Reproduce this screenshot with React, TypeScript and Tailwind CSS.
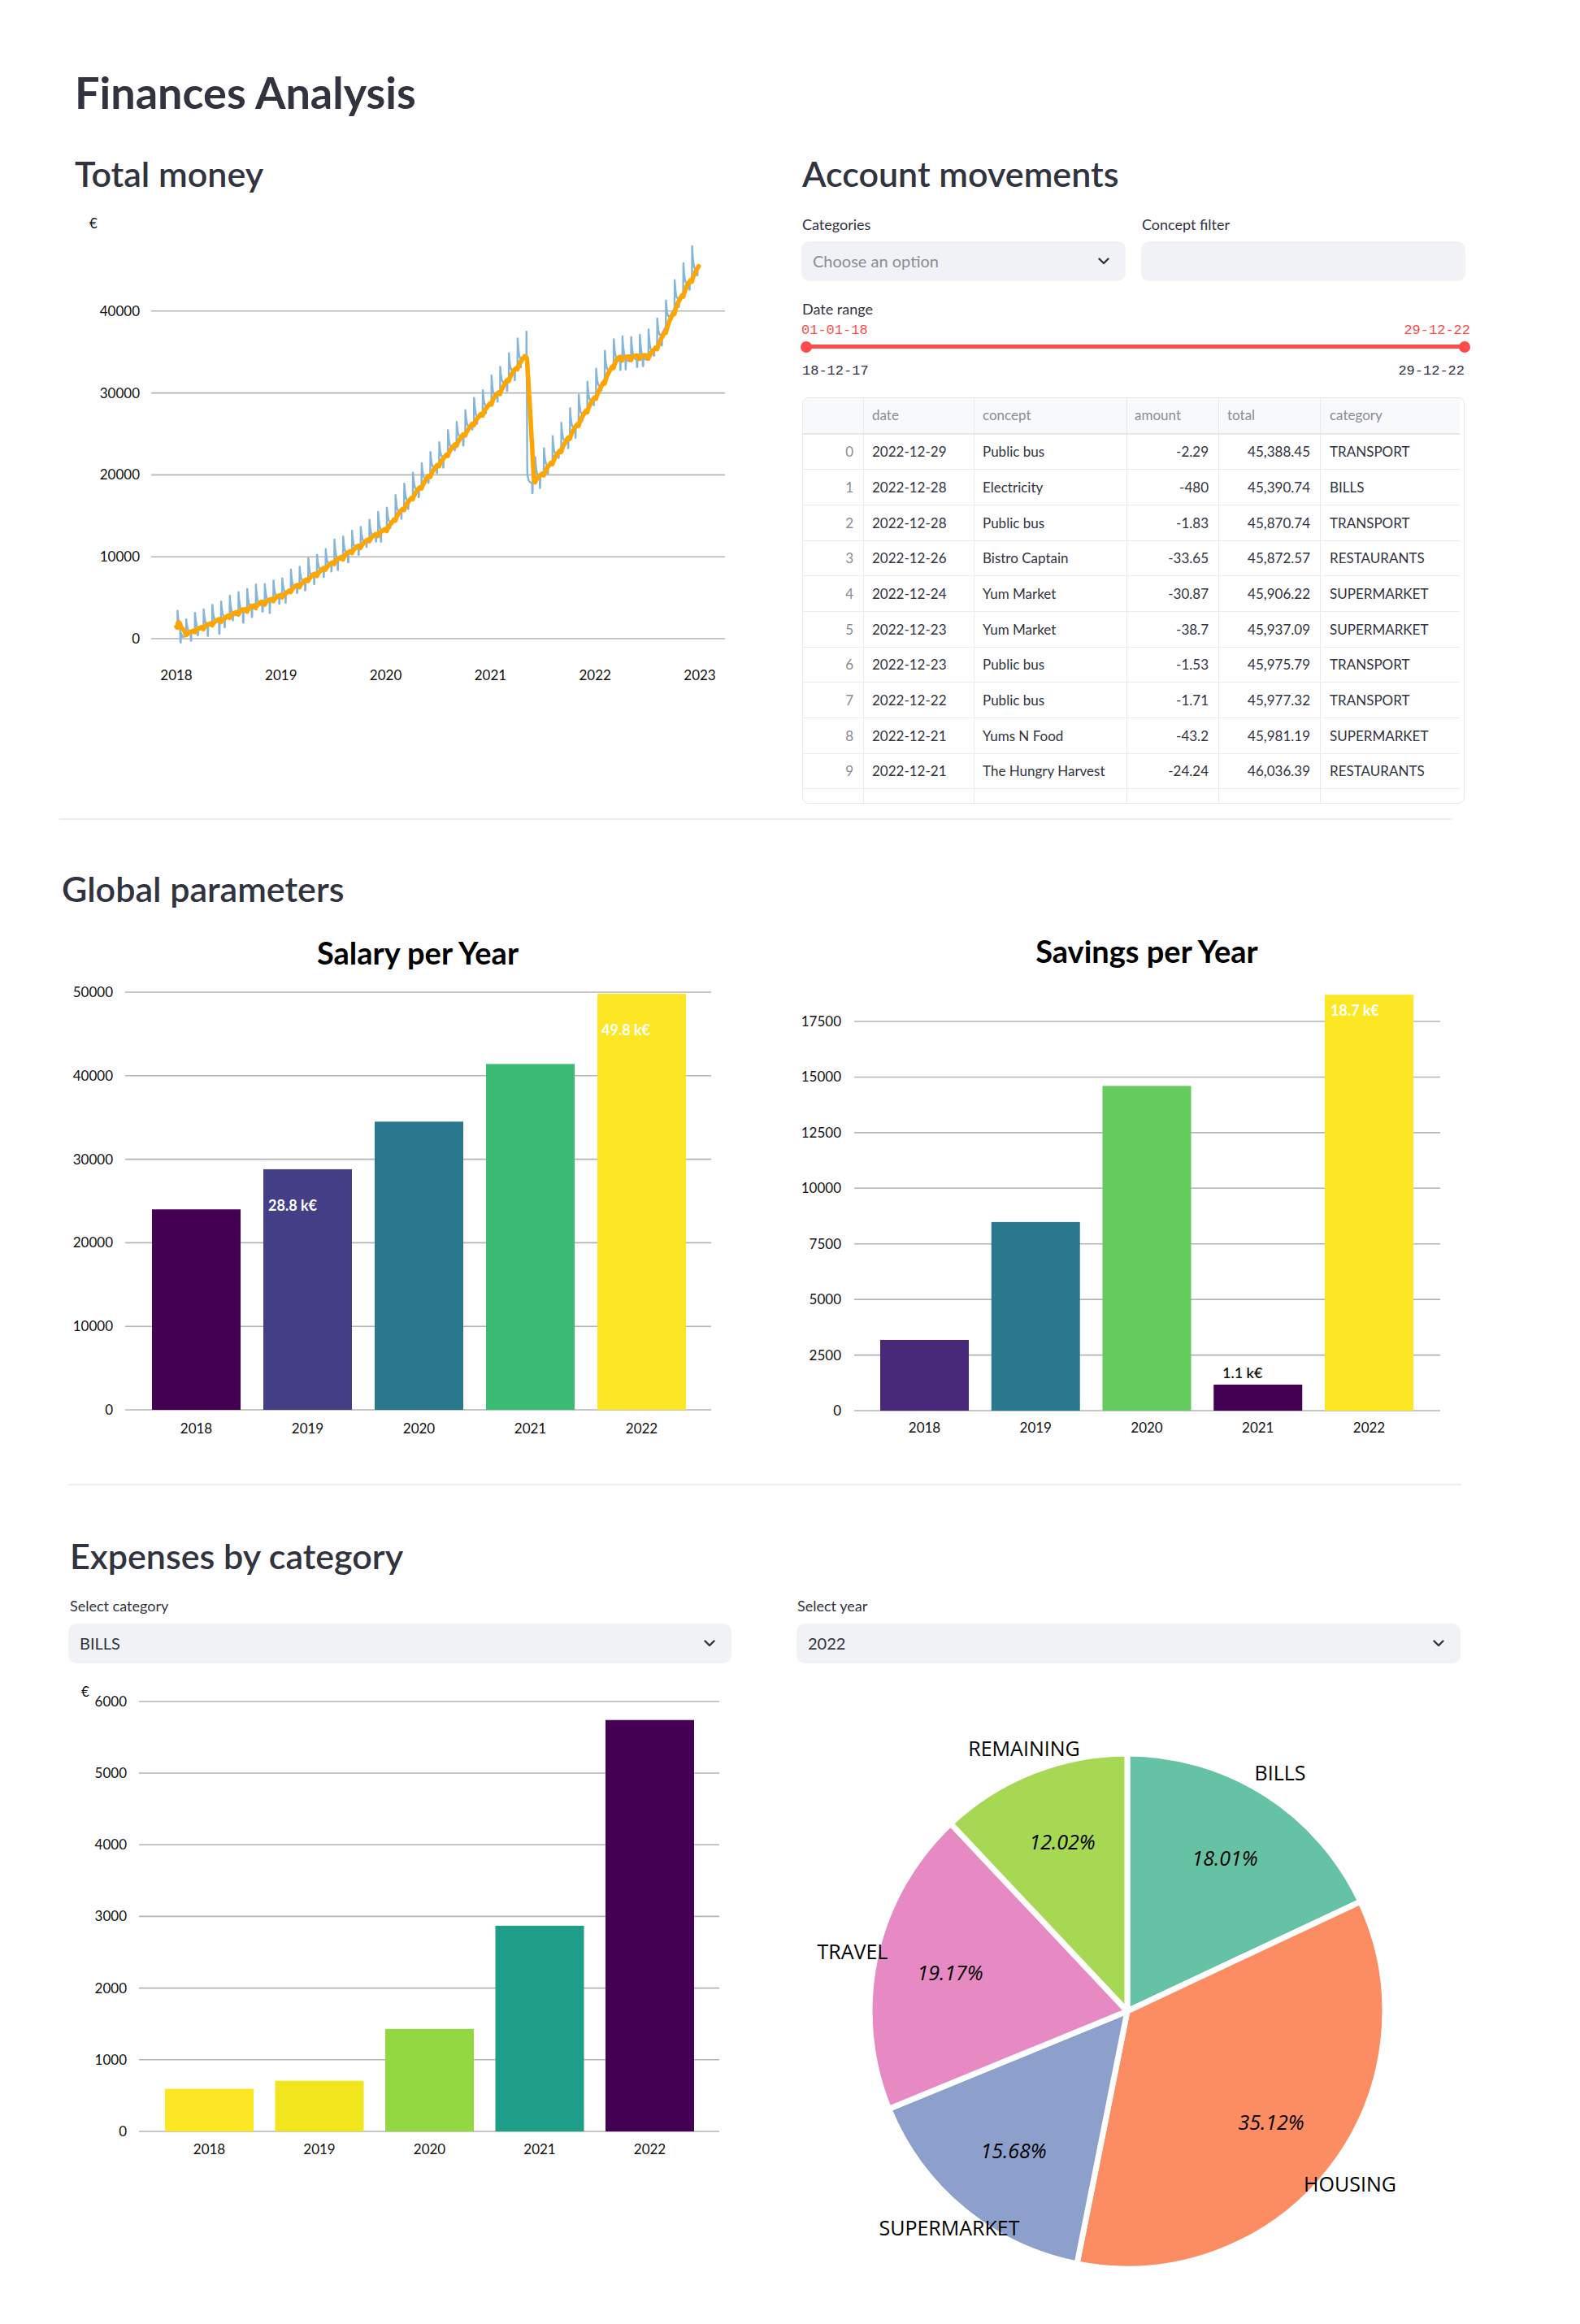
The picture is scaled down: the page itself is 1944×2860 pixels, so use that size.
import React from "react";

const TICK = "Lato, 'Noto Sans', sans-serif";
const PIEF = "'Open Sans', 'Noto Sans', sans-serif";

function Chevron() {
  return (
    <svg width="14" height="9" viewBox="0 0 14 9">
      <polyline points="1.5,1.5 7,7 12.5,1.5" fill="none" stroke="#31333F" strokeWidth="2.4" strokeLinecap="round" strokeLinejoin="round" />
    </svg>
  );
}

function Select({ value, placeholder }: { value?: string; placeholder?: string }) {
  return (
    <div className="h-[49px] rounded-[10px] bg-[#F0F2F6] flex items-center justify-between pl-[14px] pr-[20px]">
      {value ? (
        <span className="text-[20px] text-[#31333F]">{value}</span>
      ) : (
        <span className="text-[20px] text-[#8A8C93]">{placeholder}</span>
      )}
      <Chevron />
    </div>
  );
}

/* ---------------- Total money chart ---------------- */
const KP: [number, number][] = [
  [0, 2000], [0.06, 800], [0.5, 3200], [1.0, 5700], [1.5, 9800], [2.0, 14000], [2.5, 22000],
  [3.0, 29500], [3.345, 35600], [3.352, 19400], [3.45, 20200], [3.6, 22600], [4.0, 30400],
  [4.18, 34600], [4.5, 34900], [4.6, 36900], [4.8, 42300], [4.99, 46400],
];
function base(t: number) {
  for (let i = 0; i < KP.length - 1; i++) {
    const [t0, v0] = KP[i];
    const [t1, v1] = KP[i + 1];
    if (t >= t0 && t <= t1) return v0 + ((v1 - v0) * (t - t0)) / (t1 - t0);
  }
  return KP[KP.length - 1][1];
}
function rnd(n: number) {
  const x = Math.sin(n * 127.1 + 311.7) * 43758.5453;
  return x - Math.floor(x);
}
function moneySeries() {
  const N = 3000;
  const blue: number[] = [];
  const ts: number[] = [];
  for (let i = 0; i <= N; i++) {
    const t = (4.99 * i) / N;
    const p = 1 / 12;
    const tt = t - 0.01;
    const m = Math.floor(tt / p);
    const f = (tt - m * p) / p;
    const amp = 2000 + 260 * t + rnd(m) * 700;
    let v = base(t) + amp * Math.exp(-6 * f) - amp * 0.25;
    const dipAt = 0.3 + rnd(m + 50) * 0.5;
    if (f > dipAt && f < dipAt + 0.05) v -= 600 + rnd(m + 90) * 900;
    blue.push(v);
    ts.push(t);
  }
  const W = 40;
  const orange: number[] = [];
  for (let i = 0; i <= N; i++) {
    let s = 0;
    let c = 0;
    for (let j = Math.max(0, i - W); j <= i; j++) {
      s += blue[j];
      c++;
    }
    orange.push(s / c);
  }
  const X = (t: number) => 217 + t * 128.8;
  const Y = (v: number) => 786 - v * 0.01008;
  const bp = ts.map((t, i) => `${X(t).toFixed(1)},${Y(blue[i]).toFixed(1)}`).join(" ");
  const op = ts.map((t, i) => `${X(t).toFixed(1)},${Y(orange[i]).toFixed(1)}`).join(" ");
  return { bp, op };
}

function TotalMoneyChart() {
  const { bp, op } = moneySeries();
  const grid = [0, 10000, 20000, 30000, 40000];
  const years = ["2018", "2019", "2020", "2021", "2022", "2023"];
  return (
    <svg width="808" height="588" viewBox="92 262 808 588" className="block">
      <text x="110" y="281" fontFamily={TICK} fontSize="17" fill="#111">€</text>
      {grid.map((g) => {
        const y = 786 - g * 0.01008;
        return (
          <g key={g}>
            <line x1="186" x2="892" y1={y} y2={y} stroke="#b5b5b5" strokeWidth="1.6" />
            <text x="172" y={y} dy="0.35em" textAnchor="end" fontFamily={TICK} fontSize="17" fill="#111">{g}</text>
          </g>
        );
      })}
      {years.map((yr, i) => (
        <text key={yr} x={217 + i * 128.8} y="831" dy="0.35em" textAnchor="middle" fontFamily={TICK} fontSize="17" fill="#111">{yr}</text>
      ))}
      <polyline points={bp} fill="none" stroke="#84b5da" strokeWidth="2.4" strokeLinejoin="round" />
      <polyline points={op} fill="none" stroke="#FFA500" strokeWidth="5.5" strokeLinejoin="round" strokeLinecap="round" />
    </svg>
  );
}

/* ---------------- Bar charts ---------------- */
type Bar = { v: number; c: string };
function BarChart(props: {
  vb: [number, number, number, number];
  bars: Bar[];
  x0: number;
  pitch: number;
  bw: number;
  y0: number;
  k: number;
  ticks: number[];
  gx1: number;
  gx2: number;
  labelRight: number;
  xLabelY: number;
  title?: { text: string; x: number; y: number };
  euro?: { x: number; y: number };
  notes?: { text: string; x: number; y: number; fill: string; weight: number }[];
}) {
  const { vb, bars, x0, pitch, bw, y0, k, ticks, gx1, gx2, labelRight, xLabelY, title, euro, notes } = props;
  const years = ["2018", "2019", "2020", "2021", "2022"];
  return (
    <svg width={vb[2]} height={vb[3]} viewBox={vb.join(" ")} className="block shrink-0">
      {title && (
        <text x={title.x} y={title.y} textAnchor="middle" fontFamily={TICK} fontWeight="700" fontSize="38" fill="#000">{title.text}</text>
      )}
      {euro && <text x={euro.x} y={euro.y} fontFamily={TICK} fontSize="17" fill="#111">€</text>}
      {ticks.map((g) => {
        const y = y0 - g * k;
        return (
          <g key={g}>
            <line x1={gx1} x2={gx2} y1={y} y2={y} stroke="#b5b5b5" strokeWidth="1.6" />
            <text x={labelRight} y={y} dy="0.35em" textAnchor="end" fontFamily={TICK} fontSize="17" fill="#111">{g}</text>
          </g>
        );
      })}
      {bars.map((b, i) => {
        const x = x0 + i * pitch;
        const top = y0 - b.v * k;
        return (
          <g key={i}>
            <rect x={x} y={top} width={bw} height={y0 - top} fill={b.c} />
            <text x={x + bw / 2} y={xLabelY} dy="0.35em" textAnchor="middle" fontFamily={TICK} fontSize="17" fill="#111">{years[i]}</text>
          </g>
        );
      })}
      {notes &&
        notes.map((n) => (
          <text key={n.text} x={n.x} y={n.y} dy="0.35em" fontFamily={TICK} fontWeight={n.weight} fontSize="18" fill={n.fill}>{n.text}</text>
        ))}
    </svg>
  );
}

/* ---------------- Pie ---------------- */
function PieChart() {
  const cx = 1387;
  const cy = 2476;
  const r = 317;
  const slices = [
    { a1: 90, a2: 25.164, c: "#66C2A5" },
    { a1: 25.164, a2: -101.268, c: "#FC8D62" },
    { a1: -101.268, a2: -157.716, c: "#8DA0CB" },
    { a1: -157.716, a2: -226.728, c: "#E78AC3" },
    { a1: -226.728, a2: -270, c: "#A6D854" },
  ];
  const pt = (a: number) => [cx + r * Math.cos((a * Math.PI) / 180), cy - r * Math.sin((a * Math.PI) / 180)];
  const labels = [
    { t: "REMAINING", x: 1260, y: 2153 },
    { t: "BILLS", x: 1575, y: 2183 },
    { t: "TRAVEL", x: 1049, y: 2403 },
    { t: "HOUSING", x: 1661, y: 2689 },
    { t: "SUPERMARKET", x: 1168, y: 2743 },
  ];
  const pcts = [
    { t: "12.02%", x: 1307, y: 2268 },
    { t: "18.01%", x: 1507, y: 2288 },
    { t: "19.17%", x: 1169, y: 2429 },
    { t: "15.68%", x: 1247, y: 2648 },
    { t: "35.12%", x: 1564, y: 2613 },
  ];
  return (
    <svg width="817" height="780" viewBox="980 2060 817 780" className="block">
      {slices.map((s, i) => {
        const [x1, y1] = pt(s.a1);
        const [x2, y2] = pt(s.a2);
        const large = s.a1 - s.a2 > 180 ? 1 : 0;
        return (
          <path
            key={i}
            d={`M ${cx} ${cy} L ${x1} ${y1} A ${r} ${r} 0 ${large} 1 ${x2} ${y2} Z`}
            fill={s.c}
            stroke="#fff"
            strokeWidth="7"
            strokeLinejoin="round"
          />
        );
      })}
      {labels.map((l) => (
        <text key={l.t} x={l.x} y={l.y} dy="0.35em" textAnchor="middle" fontFamily={PIEF} fontSize="25" fill="#000">{l.t}</text>
      ))}
      {pcts.map((l) => (
        <text key={l.t} x={l.x} y={l.y} dy="0.35em" textAnchor="middle" fontFamily={PIEF} fontStyle="italic" fontSize="25" fill="#000">{l.t}</text>
      ))}
    </svg>
  );
}

/* ---------------- Table ---------------- */
const ROWS = [
  ["0", "2022-12-29", "Public bus", "-2.29", "45,388.45", "TRANSPORT"],
  ["1", "2022-12-28", "Electricity", "-480", "45,390.74", "BILLS"],
  ["2", "2022-12-28", "Public bus", "-1.83", "45,870.74", "TRANSPORT"],
  ["3", "2022-12-26", "Bistro Captain", "-33.65", "45,872.57", "RESTAURANTS"],
  ["4", "2022-12-24", "Yum Market", "-30.87", "45,906.22", "SUPERMARKET"],
  ["5", "2022-12-23", "Yum Market", "-38.7", "45,937.09", "SUPERMARKET"],
  ["6", "2022-12-23", "Public bus", "-1.53", "45,975.79", "TRANSPORT"],
  ["7", "2022-12-22", "Public bus", "-1.71", "45,977.32", "TRANSPORT"],
  ["8", "2022-12-21", "Yums N Food", "-43.2", "45,981.19", "SUPERMARKET"],
  ["9", "2022-12-21", "The Hungry Harvest", "-24.24", "46,036.39", "RESTAURANTS"],
];

function DataTable() {
  const cell = "h-full flex items-center border-r border-[#E8E9EC]";
  return (
    <div className="mt-[21.5px] h-[500px] w-[815px] rounded-[8px] border border-[#E6E7EB] overflow-hidden">
      <div className="w-[808px] text-[17px]">
        <div className="flex h-[45px] bg-[#F8F9FB] border-b-2 border-[#E6E7EB] text-[#8A8C93]">
          <div className={`${cell} w-[75px]`} />
          <div className={`${cell} w-[136px] pl-[10px]`}>date</div>
          <div className={`${cell} w-[188px] pl-[10px]`}>concept</div>
          <div className={`${cell} w-[113px] pl-[9px]`}>amount</div>
          <div className={`${cell} w-[125px] pl-[10px]`}>total</div>
          <div className="h-full flex items-center w-[171px] pl-[11px]">category</div>
        </div>
        {ROWS.map((r) => (
          <div key={r[0]} className="flex h-[43.7px] border-b border-[#EAEBEE] text-[#31333F]">
            <div className={`${cell} w-[75px] justify-end pr-[12px] text-[#8A8C93]`}>{r[0]}</div>
            <div className={`${cell} w-[136px] pl-[10px]`}>{r[1]}</div>
            <div className={`${cell} w-[188px] pl-[10px]`}>{r[2]}</div>
            <div className={`${cell} w-[113px] justify-end pr-[12px]`}>{r[3]}</div>
            <div className={`${cell} w-[125px] justify-end pr-[12px]`}>{r[4]}</div>
            <div className="h-full flex items-center w-[171px] pl-[11px]">{r[5]}</div>
          </div>
        ))}
        <div className="flex h-[43.7px]">
          <div className={`${cell} w-[75px]`} />
          <div className={`${cell} w-[136px]`} />
          <div className={`${cell} w-[188px]`} />
          <div className={`${cell} w-[113px]`} />
          <div className={`${cell} w-[125px]`} />
          <div className="w-[171px]" />
        </div>
      </div>
    </div>
  );
}

export default function App() {
  return (
    <div className="w-[1944px] min-h-[2860px] bg-white text-[#31333F] [font-family:Lato,'Noto_Sans',sans-serif]">
      {/* Title */}
      <div className="pl-[92px] pt-[81px]">
        <h1 className="text-[54px] leading-[65px] font-bold">Finances Analysis</h1>
      </div>

      {/* Section 1 */}
      <div className="flex mt-[41.6px]">
        <div className="ml-[92px] w-[808px]">
          <h2 className="text-[43px] leading-[52px] font-semibold">Total money</h2>
          <div className="mt-[22px]">
            <TotalMoneyChart />
          </div>
        </div>
        <div className="ml-[86px] w-[817px]">
          <h2 className="text-[43px] leading-[52px] font-semibold pl-[1px]">Account movements</h2>
          <div className="flex gap-[19px] mt-[24px]">
            <div className="w-[399px]">
              <div className="text-[18px] leading-[24px] pl-[1px]">Categories</div>
              <div className="mt-[9px]">
                <Select placeholder="Choose an option" />
              </div>
            </div>
            <div className="w-[399px]">
              <div className="text-[18px] leading-[24px] pl-[1px]">Concept filter</div>
              <div className="mt-[9px] h-[49px] rounded-[10px] bg-[#F0F2F6]" />
            </div>
          </div>
          <div className="mt-[22px] text-[18px] leading-[24px] pl-[1px]">Date range</div>
          <div className="mt-[5.5px] flex justify-between mr-[-6px] text-[17px] leading-[20px] text-[#FF4B4B] [font-family:'Liberation_Mono',monospace]">
            <span>01-01-18</span>
            <span>29-12-22</span>
          </div>
          <div className="relative mt-[2.5px] h-[14px] ml-[6px] mr-[1px]">
            <div className="absolute left-0 right-0 top-[4.5px] h-[5px] bg-[#FF4B4B] rounded-full" />
            <div className="absolute left-[-7px] top-0 w-[14px] h-[14px] rounded-full bg-[#FF4B4B]" />
            <div className="absolute right-[-7px] top-0 w-[14px] h-[14px] rounded-full bg-[#FF4B4B]" />
          </div>
          <div className="mt-[13.5px] flex justify-between pl-[1px] pr-[1px] text-[17px] leading-[20px] text-[#31333F] [font-family:'Liberation_Mono',monospace]">
            <span>18-12-17</span>
            <span>29-12-22</span>
          </div>
          <div className="pl-[1px]">
            <DataTable />
          </div>
        </div>
      </div>

      <div className="mt-[18px] ml-[73px] w-[1714px] h-[2px] bg-[#EEEEEE]" />

      {/* Section 2 */}
      <div className="pl-[76px] mt-[59.6px]">
        <h2 className="text-[43px] leading-[52px] font-semibold">Global parameters</h2>
      </div>
      <div className="flex mt-[8.4px] ml-[40px]">
        <BarChart
          vb={[40, 1130, 880, 660]}
          bars={[
            { v: 24000, c: "#440154" },
            { v: 28800, c: "#433E85" },
            { v: 34500, c: "#2A788E" },
            { v: 41400, c: "#3CBB75" },
            { v: 49800, c: "#FDE725" },
          ]}
          x0={187}
          pitch={137}
          bw={109}
          y0={1736}
          k={0.01028}
          ticks={[0, 10000, 20000, 30000, 40000, 50000]}
          gx1={154}
          gx2={875}
          labelRight={139}
          xLabelY={1759}
          title={{ text: "Salary per Year", x: 514, y: 1188 }}
          notes={[
            { text: "28.8 k€", x: 330, y: 1485, fill: "#fff", weight: 700 },
            { text: "49.8 k€", x: 740, y: 1269, fill: "#fff", weight: 700 },
          ]}
        />
        <div className="ml-[52px]">
          <BarChart
            vb={[972, 1130, 828, 660]}
            bars={[
              { v: 3180, c: "#482878" },
              { v: 8480, c: "#2A788E" },
              { v: 14600, c: "#65CB5E" },
              { v: 1170, c: "#440154" },
              { v: 18700, c: "#FDE725" },
            ]}
            x0={1083}
            pitch={136.75}
            bw={109}
            y0={1737}
            k={0.02737}
            ticks={[0, 2500, 5000, 7500, 10000, 12500, 15000, 17500]}
            gx1={1051}
            gx2={1772}
            labelRight={1035}
            xLabelY={1758}
            title={{ text: "Savings per Year", x: 1411, y: 1186 }}
            notes={[
              { text: "18.7 k€", x: 1637, y: 1245, fill: "#fff", weight: 700 },
              { text: "1.1 k€", x: 1504, y: 1691, fill: "#111", weight: 600 },
            ]}
          />
        </div>
      </div>

      <div className="mt-[37px] ml-[84px] w-[1714px] h-[2px] bg-[#EEEEEE]" />

      {/* Section 3 */}
      <div className="pl-[86px] mt-[61.6px]">
        <h2 className="text-[43px] leading-[52px] font-semibold">Expenses by category</h2>
      </div>
      <div className="flex mt-[22.4px]">
        <div className="ml-[84px] w-[816px]">
          <div className="text-[18px] leading-[24px] pl-[2px]">Select category</div>
          <div className="mt-[10px]">
            <Select value="BILLS" />
          </div>
          <div className="mt-[12px]">
            <BarChart
              vb={[84, 2060, 816, 640]}
              bars={[
                { v: 595, c: "#FDE725" },
                { v: 707, c: "#F1E51D" },
                { v: 1430, c: "#93D741" },
                { v: 2870, c: "#1F9E89" },
                { v: 5740, c: "#440154" },
              ]}
              x0={203}
              pitch={135.5}
              bw={109}
              y0={2624}
              k={0.0882}
              ticks={[0, 1000, 2000, 3000, 4000, 5000, 6000]}
              gx1={171}
              gx2={885}
              labelRight={156}
              xLabelY={2646}
              euro={{ x: 100, y: 2089 }}
            />
          </div>
        </div>
        <div className="ml-[80px] w-[817px]">
          <div className="text-[18px] leading-[24px] pl-[1px]">Select year</div>
          <div className="mt-[10px]">
            <Select value="2022" />
          </div>
          <div className="mt-[12px]">
            <PieChart />
          </div>
        </div>
      </div>
    </div>
  );
}
